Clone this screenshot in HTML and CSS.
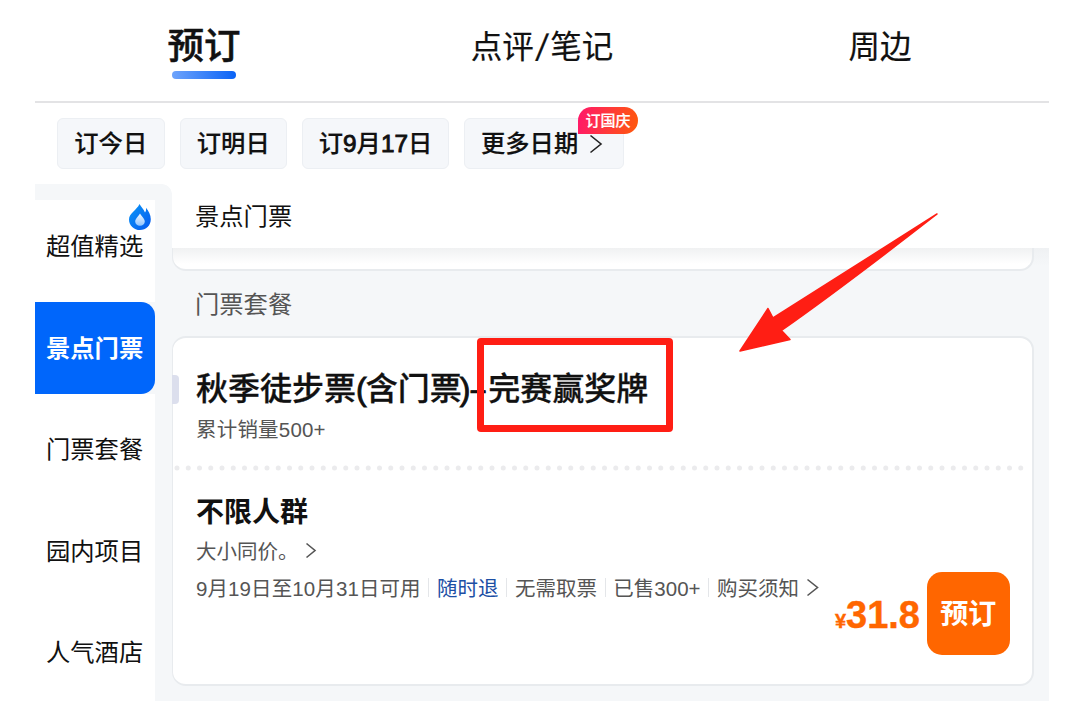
FILE: index.html
```
<!DOCTYPE html>
<html lang="zh-CN">
<head>
<meta charset="utf-8">
<title>景点门票</title>
<link rel="stylesheet" href="styles.css">
</head>
<body>
<div class="page">
  <nav class="tabs">
    <div class="tab tab-active"><span>预订</span></div>
    <div class="tab"><span>点评<span class="slash">/</span>笔记</span></div>
    <div class="tab"><span>周边</span></div>
  </nav>

  <div class="chips">
    <div class="chip chip-day">订今日</div>
    <div class="chip chip-day">订明日</div>
    <div class="chip chip-date">订<b>9</b>月<b>17</b>日</div>
    <div class="chip chip-more">更多日期
      <svg class="chip-arrow" viewBox="0 0 14 20"><path d="M1.5 1.5 12 10 1.5 18.5"/></svg>
      <span class="badge">订国庆</span>
    </div>
  </div>

  <div class="main">
    <aside class="side">
      <div class="side-cap"></div>
      <div class="side-item side-first">超值精选
        <svg class="flame" viewBox="0 0 24 28">
          <defs>
            <linearGradient id="fl" x1="0" y1="0" x2="1" y2="1"><stop offset="0" stop-color="#0a98f8"/><stop offset="1" stop-color="#0759ee"/></linearGradient>
            <linearGradient id="dr" x1="0" y1="0" x2="0" y2="1"><stop offset="0" stop-color="#f4f9ff"/><stop offset="1" stop-color="#8fc4ff"/></linearGradient>
          </defs>
          <path fill="url(#fl)" d="M11.500 1C13 3.500 15.500 6 17 9.500C18 8.500 18.200 7 18 4.800C20.500 7.800 22.800 12 22.800 16.200C22.800 22.500 18 27 12 27C6 27 1 22.500 1 16.400C1 10.500 8.800 7 11.500 1Z"/>
          <path fill="url(#dr)" d="M12 10.500C13.500 13.400 16.800 15.500 16.800 18.500C16.800 21 14.800 22.700 12 22.700C9.200 22.700 7.200 21 7.200 18.500C7.200 15.500 10.500 13.400 12 10.500Z"/>
        </svg>
      </div>
      <div class="side-item side-active">景点门票</div>
      <div class="side-item side-next">门票套餐</div>
      <div class="side-item">园内项目</div>
      <div class="side-item side-last">人气酒店</div>
    </aside>

    <section class="content">
      <header class="section-head">景点门票</header>
      <div class="list">
        <div class="card card-prev"></div>
        <h2 class="group">门票套餐</h2>
        <article class="card ticket">
          <span class="tag"></span>
          <div class="ticket-head">
            <h3 class="ticket-title">秋季徒步票<span class="paren">(</span>含门票<span class="paren paren-end">)</span><span class="dash">-</span>完赛赢奖牌</h3>
            <p class="sales">累计销量500+</p>
          </div>
          <svg class="dots" viewBox="0 0 858 6"><line x1="4" y1="3" x2="857" y2="3"/></svg>
          <div class="offer">
            <h4 class="offer-title">不限人群</h4>
            <p class="note">大小同价。<svg class="note-arrow" viewBox="0 0 12 17"><path d="M1.500 1.500 10 8.500 1.500 15.500"/></svg></p>
            <div class="facts">
              <span class="f-date">9月19日至10月31日可用</span><i></i><span class="refund">随时退</span><i></i><span>无需取票</span><i></i><span>已售300+</span><i></i><span>购买须知</span>
              <svg class="fact-arrow" viewBox="0 0 13 19"><path d="M1.500 1.500 11.500 9.500 1.500 17.500"/></svg>
            </div>
          </div>
          <div class="buy">
            <span class="price"><small>¥</small>31.8</span>
            <span class="book">预订</span>
          </div>
        </article>
      </div>
    </section>
  </div>
</div>
<div class="highlight"></div>
<svg class="pointer" viewBox="0 0 202 142"><path d="M199 1 35 105 30 95.500 2 138 52 126.500 43.500 117.500C94 82 145 43 199 1Z"/></svg>
</body>
</html>
```
FILE: styles.css
```
* { box-sizing: border-box; margin: 0; padding: 0; }
body {
  width: 1080px; height: 702px; overflow: hidden; position: relative;
  background: #fff; color: #111;
  font-family: "Liberation Sans", "Noto Sans CJK SC", sans-serif;
}
.page { width: 1014px; height: 701px; margin-left: 35px; display: flex; flex-direction: column; }
h2, h3, h4 { font-weight: 400; }
p, h2, h3, h4, span { white-space: nowrap; }

.tabs { display: grid; grid-template-columns: repeat(3, 1fr); height: 103px; border-bottom: 2px solid #e3e3e5; }
.tab { display: flex; flex-direction: column; align-items: center; padding-top: 20px; font: 31.500px/48px "Noto Sans CJK SC", sans-serif; -webkit-text-stroke: 0.200px #111; }
.slash { display: inline-block; margin: 0 2px; transform: translateY(-1px) scale(1.200, 0.900); }
.tab-active { font-size: 36.500px; font-weight: 500; -webkit-text-stroke: 0.500px #111; }
.tab-active::after { content: ""; width: 64px; height: 8px; margin-top: 3px; border-radius: 4px; background: linear-gradient(90deg, #6ea3fb, #0a63f6); }

.chips { display: flex; gap: 15px; padding: 15px 0 0 22px; height: 81px; }
.chip {
  height: 51px; border: 1.500px solid #eceff3; border-radius: 6px; background: #f5f7fa;
  font-size: 24.300px; line-height: 50px; font-weight: 500; text-align: center; white-space: nowrap;
  -webkit-text-stroke: 0.200px #111;
}
.chip b { font-weight: 500; -webkit-text-stroke: 0.900px #111; }
.chip-day { width: 107.500px; }
.chip-date { width: 147px; }
.chip-more { width: 160px; position: relative; display: flex; align-items: center; padding-left: 16px; }
.chip-arrow { width: 14px; height: 20px; margin-left: 11px; fill: none; stroke: #222; stroke-width: 1.600; }
.badge {
  position: absolute; left: 113px; top: -12px; width: 60px; height: 26.500px;
  border-radius: 14px 14px 14px 0; background: linear-gradient(100deg, #ff176b, #ff5a0a);
  color: #fff; font-size: 15px; line-height: 27px; text-align: center; -webkit-text-stroke: 0.200px #fff;
}

.main { flex: 1; display: flex; background: #f5f7f9; min-height: 0; }
.side { width: 120px; display: flex; flex-direction: column; font-size: 24.300px; }
.side-cap { flex: none; height: 16px; background: #f5f7f9; }
.side-item { flex: none; height: 101.500px; padding-left: 11px; line-height: 101px; background: #fff; white-space: nowrap; }
.side-first { position: relative; height: 102px; line-height: 94px; }
.flame { position: absolute; left: 92.500px; top: 3px; width: 24px; height: 28px; }
.side-active { height: 92px; line-height: 93px; border-radius: 0 14px 14px 0; background: #0066fb; color: #fff; font-weight: 700; }
.side-next { height: 106.500px; line-height: 112px; }
.side-last { height: 101px; }

.content { flex: 1; display: flex; flex-direction: column; min-width: 0; }
.section-head { position: relative; height: 64px; margin-left: 17px; padding-left: 23px; background: #fff; font-size: 24.300px; line-height: 65px; }
.section-head::before { content: ""; position: absolute; left: -10px; top: 0; width: 10px; height: 10px; background: radial-gradient(circle at 0 100%, #f5f7f9 9.500px, #fff 10px); }
.list { flex: 1; padding: 0 15.500px 0 17px; background: linear-gradient(#eff1f3, #f5f7f9 18px) 17px 0 no-repeat; }
.card { border: 1.500px solid #e8ebee; background: #fff; }
.card-prev { height: 23px; border-width: 0 2px 2px 1px; border-radius: 0 0 14px 14px; background: linear-gradient(#f0f1f2, #fff 16px); }
.group { height: 65px; padding-left: 23px; font-size: 24.300px; line-height: 67px; color: #555; }
.ticket { position: relative; height: 350px; border-width: 2px 2px 2px 1px; border-radius: 14px; }
.tag { position: absolute; left: -1px; top: 37px; width: 7px; height: 29px; border-radius: 0 4px 4px 0; background: #dcdfed; }
.ticket-head { height: 127px; padding: 28px 0 0 23px; }
.ticket-title { height: 46px; font-size: 32px; line-height: 47px; font-weight: 500; -webkit-text-stroke: 0.300px #111; }
.paren { display: inline-block; margin-right: -1px; -webkit-text-stroke: 0.900px #111; }
.paren-end { margin-right: -4px; transform: translateX(-2px); }
.dash { display: inline-block; width: 20px; text-align: center; transform: scaleX(1.800); -webkit-text-stroke: 0.700px #111; }
.sales { font-size: 20.500px; line-height: 36px; color: #555; letter-spacing: 0.200px; }
.dots { display: block; width: 858px; height: 6px; }
.dots line { stroke: #ebebed; stroke-width: 5; stroke-linecap: round; stroke-dasharray: 0 11.250; }
.offer { padding: 20px 0 0 23px; }
.offer-title { height: 43px; font-size: 28px; line-height: 44px; font-weight: 700; }
.note { display: flex; align-items: center; height: 32px; font-size: 20.500px; color: #555; }
.note-arrow { width: 12px; height: 17px; margin-left: 6px; }
.note-arrow, .fact-arrow { fill: none; stroke: #555; stroke-width: 1.600; }
.facts { display: flex; align-items: center; height: 42px; font-size: 20.500px; color: #555; }
.f-date { letter-spacing: 0.100px; }
.facts i { width: 1px; height: 19px; margin: 0 7.700px; background: #e4e6e9; }
.facts .refund { color: #1c4fa5; }
.fact-arrow { width: 13px; height: 19px; margin-left: 7px; }
.buy { position: absolute; right: 22px; bottom: 28px; display: flex; align-items: center; gap: 7px; transform: translateY(1px); }
.price { padding-top: 10px; color: #ff6600; font-size: 38px; line-height: 72px; font-weight: 700; -webkit-text-stroke: 0.400px #ff6600; }
.price small { font-size: 20px; }
.book { width: 82.500px; height: 83px; border-radius: 15px; background: #ff6600; color: #fff; font-size: 28px; line-height: 85px; font-weight: 700; text-align: center; }

.highlight { position: absolute; left: 477px; top: 338px; width: 196px; height: 94px; border: 7px solid #ff1e14; border-radius: 4px; }
.pointer { position: absolute; left: 738px; top: 213px; width: 202px; height: 142px; fill: #ff1e14; stroke: #ff1e14; stroke-width: 1.500; stroke-linejoin: round; }
```
